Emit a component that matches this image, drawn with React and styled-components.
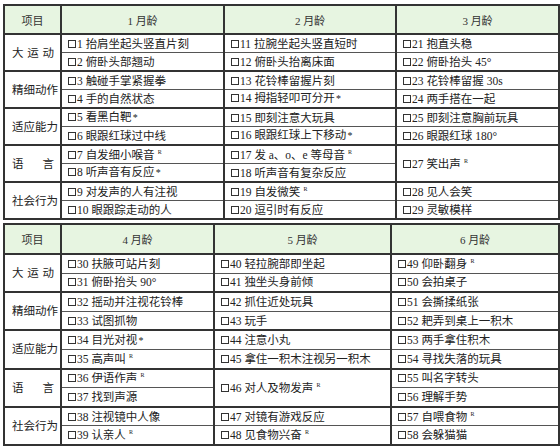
import React from "react";
import styled, { createGlobalStyle } from "styled-components";

const GlobalStyle = createGlobalStyle`
  html, body { margin: 0; padding: 0; background: #fff; }
  body {
    font-family: "Liberation Serif", "Noto Sans CJK SC", serif;
    color: #222;
  }
`;

const tables = [
  {
    cols: [57, 163, 172, 163],
    head: 27,
    row: 18.5,
    ages: ["1 月龄", "2 月龄", "3 月龄"],
    groups: [
      { label: "大 运 动", cells: [
        [["1 抬肩坐起头竖直片刻"], ["2 俯卧头部翘动"]],
        [["11 拉腕坐起头竖直短时"], ["12 俯卧头抬离床面"]],
        [["21 抱直头稳"], ["22 俯卧抬头 45°"]],
      ] },
      { label: "精细动作", cells: [
        [["3 触碰手掌紧握拳"], ["4 手的自然状态"]],
        [["13 花铃棒留握片刻"], ["14 拇指轻叩可分开", "*"]],
        [["23 花铃棒留握 30s"], ["24 两手搭在一起"]],
      ] },
      { label: "适应能力", cells: [
        [["5 看黑白靶", "*"], ["6 眼跟红球过中线"]],
        [["15 即刻注意大玩具"], ["16 眼跟红球上下移动", "*"]],
        [["25 即刻注意胸前玩具"], ["26 眼跟红球 180°"]],
      ] },
      { label: "语 言", cells: [
        [["7 自发细小喉音", "R"], ["8 听声音有反应", "*"]],
        [["17 发 a、o、e 等母音", "R"], ["18 听声音有复杂反应"]],
        [["27 笑出声", "R"]],
      ] },
      { label: "社会行为", cells: [
        [["9 对发声的人有注视"], ["10 眼跟踪走动的人"]],
        [["19 自发微笑", "R"], ["20 逗引时有反应"]],
        [["28 见人会笑"], ["29 灵敏模样"]],
      ] },
    ],
  },
  {
    cols: [57, 153, 177, 168],
    head: 28,
    row: 19.1,
    ages: ["4 月龄", "5 月龄", "6 月龄"],
    groups: [
      { label: "大 运 动", cells: [
        [["30 扶腋可站片刻"], ["31 俯卧抬头 90°"]],
        [["40 轻拉腕部即坐起"], ["41 独坐头身前倾"]],
        [["49 仰卧翻身", "R"], ["50 会拍桌子"]],
      ] },
      { label: "精细动作", cells: [
        [["32 摇动并注视花铃棒"], ["33 试图抓物"]],
        [["42 抓住近处玩具"], ["43 玩手"]],
        [["51 会撕揉纸张"], ["52 耙弄到桌上一积木"]],
      ] },
      { label: "适应能力", cells: [
        [["34 目光对视", "*"], ["35 高声叫", "R"]],
        [["44 注意小丸"], ["45 拿住一积木注视另一积木"]],
        [["53 两手拿住积木"], ["54 寻找失落的玩具"]],
      ] },
      { label: "语 言", cells: [
        [["36 伊语作声", "R"], ["37 找到声源"]],
        [["46 对人及物发声", "R"]],
        [["55 叫名字转头"], ["56 理解手势"]],
      ] },
      { label: "社会行为", cells: [
        [["38 注视镜中人像"], ["39 认亲人", "R"]],
        [["47 对镜有游戏反应"], ["48 见食物兴奋", "R"]],
        [["57 自喂食物", "R"], ["58 会躲猫猫"]],
      ] },
    ],
  },
];

const Page = styled.div`
  display: flex;
  flex-direction: column;
  gap: 3px;
  padding: 4px 2px 0 3px;
`;

const Sheet = styled.table`
  width: 555px;
  border-collapse: collapse;
  table-layout: fixed;
  border: 2px solid #333;
`;

const HeadCell = styled.th`
  height: ${(p) => p.$h}px;
  padding: 0;
  background: #e7f5e1;
  border: 1px solid #444;
  border-left: 2px solid #333;
  font-weight: normal;
  font-size: 11px;
  color: #333;
  text-align: center;
`;

const Row = styled.tr`
  height: ${(p) => p.$h}px;
`;

const CategoryCell = styled.td`
  padding: 0 6px 0 7px;
  border-top: 2px solid #333;
  border-left: 2px solid #333;
  font-size: 11.5px;
  line-height: 14px;
  color: #222;
  text-align: justify;
  text-align-last: justify;
  white-space: nowrap;
`;

const ItemCell = styled.td`
  padding: 0 0 0 6px;
  border-top: ${(p) => (p.$first ? "2px solid #333" : "1px solid #555")};
  border-left: 2px solid #333;
  font-size: 11.5px;
  line-height: 14px;
  white-space: nowrap;
  overflow: hidden;
`;

const Box = styled.span`
  display: inline-block;
  box-sizing: border-box;
  width: 8px;
  height: 8px;
  border: 1px solid #333;
  margin-right: 1px;
  vertical-align: 0;
`;

const Star = styled.span`
  font-size: 10px;
  margin-left: 1px;
`;

const Report = styled.sup`
  font-size: 6px;
  margin-left: 3px;
  vertical-align: 5px;
  line-height: 0;
`;

const Item = ({ data }) => {
  const [text, mark] = data;
  return (
    <>
      <Box />
      {text}
      {mark === "*" && <Star>*</Star>}
      {mark === "R" && <Report>R</Report>}
    </>
  );
};

const Table = ({ t }) => (
  <Sheet>
    <colgroup>
      {t.cols.map((w, i) => (
        <col key={i} style={{ width: w }} />
      ))}
    </colgroup>
    <thead>
      <tr>
        <HeadCell $h={t.head}>项目</HeadCell>
        {t.ages.map((a) => (
          <HeadCell key={a} $h={t.head}>{a}</HeadCell>
        ))}
      </tr>
    </thead>
    <tbody>
      {t.groups.map((g) =>
        [0, 1].map((r) => (
          <Row key={g.label + r} $h={t.row}>
            {r === 0 && <CategoryCell rowSpan={2}>{g.label}</CategoryCell>}
            {g.cells.map((c, ci) => {
              if (c.length === 1) {
                return r === 0 ? (
                  <ItemCell key={ci} rowSpan={2} $first>
                    <Item data={c[0]} />
                  </ItemCell>
                ) : null;
              }
              return (
                <ItemCell key={ci} $first={r === 0}>
                  <Item data={c[r]} />
                </ItemCell>
              );
            })}
          </Row>
        ))
      )}
    </tbody>
  </Sheet>
);

export default function App() {
  return (
    <>
      <GlobalStyle />
      <Page>
        {tables.map((t, i) => (
          <Table key={i} t={t} />
        ))}
      </Page>
    </>
  );
}
